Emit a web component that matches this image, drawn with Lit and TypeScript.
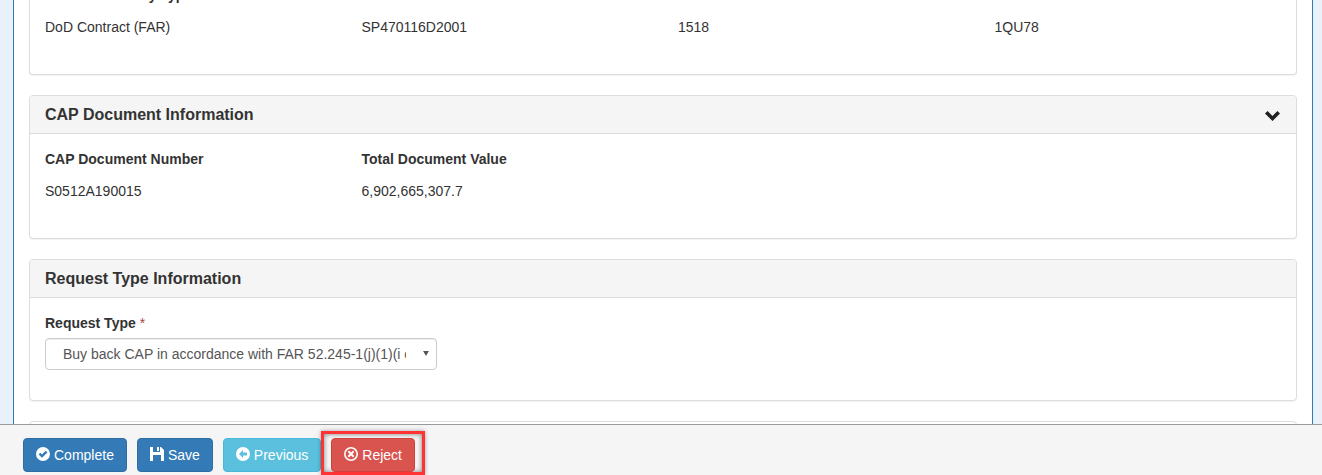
import { LitElement, html, css } from "lit";
import { customElement } from "lit/decorators.js";

@customElement("app-root")
export class AppRoot extends LitElement {
  static styles = css`
    :host {
      display: flex;
      flex-direction: column;
      height: 475px;
      overflow: hidden;
      background: #e9f1fa;
      font-family: "Liberation Sans", Arial, sans-serif;
      font-size: 14px;
      line-height: 20px;
      color: #333;
    }
    .scroll {
      flex: 1;
      min-height: 0;
      overflow: hidden;
      margin: 0 9px 0 13px;
      padding: 0 15px;
      background: #fff;
      border-left: 1px solid #337ab7;
      border-right: 1px solid #337ab7;
    }
    .stack { margin-top: -28px; display: flex; flex-direction: column; gap: 20px; }
    .panel {
      background: #fff;
      border: 1px solid #ddd;
      border-radius: 4px;
      box-shadow: 0 1px 1px rgba(0, 0, 0, 0.05);
      flex: none;
    }
    .panel.first { border-top: 0; height: 103px; padding: 13px 15px 0; box-sizing: border-box; }
    .panel.last { height: 60px; }
    .heading {
      height: 38px;
      box-sizing: border-box;
      padding: 8px 15px;
      background: #f5f5f5;
      border-bottom: 1px solid #ddd;
      border-radius: 3px 3px 0 0;
      font-size: 16px;
      font-weight: 700;
      line-height: 20px;
      display: flex;
      justify-content: space-between;
      align-items: center;
    }
    .chev { width: 15px; height: 12px; display: block; fill: #222; margin-right: 1px; }
    .body { padding: 15px; }
    .row { display: grid; grid-template-columns: repeat(4, 316.5px); }
    .label { font-weight: 700; height: 20px; white-space: nowrap; }
    .val { margin-top: 12px; height: 20px; white-space: nowrap; }
    .sp { height: 22px; }
    .req { color: #a94442; font-weight: 400; }
    .selwrap { position: relative; width: 392px; margin-top: 5px; margin-bottom: 15px; }
    select {
      display: block;
      appearance: none;
      -webkit-appearance: none;
      width: 100%;
      height: 32px;
      padding: 0 30px 0 17px;
      background: #fff;
      border: 1px solid #ccc;
      border-radius: 4px;
      box-shadow: inset 0 1px 1px rgba(0, 0, 0, 0.075);
      color: #555;
      font: 14px "Liberation Sans", Arial, sans-serif;
    }
    .caret {
      position: absolute;
      right: 8px;
      top: 13px;
      width: 6px;
      height: 5px;
      fill: #555;
    }
    .footer {
      flex: none;
      height: 51px;
      box-sizing: border-box;
      background: #f5f5f5;
      border-top: 1px solid #999;
      padding: 13px 0 0 23px;
      display: flex;
      align-items: flex-start;
      gap: 10px;
    }
    .btn {
      height: 34px;
      box-sizing: border-box;
      display: inline-flex;
      align-items: center;
      gap: 4px;
      padding: 0 12px;
      border: 1px solid;
      border-radius: 4px;
      color: #fff;
      font: 14px/20px "Liberation Sans", Arial, sans-serif;
    }
    .btn svg { width: 14px; height: 14px; fill: #fff; display: block; margin-top: -2px; }
    .primary { background: #337ab7; border-color: #2e6da4; }
    .info { background: #5bc0de; border-color: #46b8da; }
    .danger { background: #d9534f; border-color: #d43f3a; }
    .hl {
      margin: -7px 0 0 -10px;
      padding: 4px 7px 0;
      border: 3px solid #f33;
      box-sizing: border-box;
      height: 44px;
      box-shadow: 0 0 4px rgba(0, 0, 0, 0.35), inset 0 0 5px rgba(0, 0, 0, 0.5);
      flex: none;
    }
  `;

  render() {
    return html`
      <div class="scroll">
        <div class="stack">
          <section class="panel first">
            <div class="row">
              <div class="label">Contract Activity Type</div><div class="label"></div><div class="label"></div><div class="label"></div>
              <div class="val">DoD Contract (FAR)</div><div class="val">SP470116D2001</div><div class="val">1518</div><div class="val">1QU78</div>
            </div>
          </section>
          <section class="panel">
            <div class="heading">CAP Document Information
              <svg class="chev" viewBox="0 0 15 12"><path d="M0 4.6 2.6 2 7.5 6.9 12.4 2 15 4.6 7.5 12Z"/></svg>
            </div>
            <div class="body">
              <div class="row">
                <div class="label">CAP Document Number</div><div class="label">Total Document Value</div><div></div><div></div>
                <div class="val">S0512A190015</div><div class="val">6,902,665,307.7</div>
              </div>
              <div class="sp"></div>
            </div>
          </section>
          <section class="panel">
            <div class="heading">Request Type Information</div>
            <div class="body">
              <div class="label">Request Type <span class="req">*</span></div>
              <div class="selwrap">
                <select aria-label="Request Type"><option>Buy back CAP in accordance with FAR 52.245-1(j)(1)(i or ii)</option></select>
                <svg class="caret" viewBox="0 0 7 6"><path d="M0 0H7L3.5 6Z"/></svg>
              </div>
            </div>
          </section>
          <section class="panel last"></section>
        </div>
      </div>
      <div class="footer">
        <button class="btn primary">
          <svg viewBox="0 0 14 14"><path fill-rule="evenodd" d="M7 0a7 7 0 1 0 0 14A7 7 0 0 0 7 0ZM6 10.8 2.6 7.4 4.3 5.7 6 7.4 9.7 3.7 11.4 5.4Z"/></svg>Complete</button>
        <button class="btn primary">
          <svg viewBox="0 0 14 14"><path fill-rule="evenodd" d="M0 0h3v5h7V0h1l3 3v11H0ZM7 0h2v4H7ZM3 8v6h8V8Z"/></svg>Save</button>
        <button class="btn info">
          <svg viewBox="0 0 14 14"><path fill-rule="evenodd" d="M7 0a7 7 0 1 0 0 14A7 7 0 0 0 7 0ZM7 3 3 7l4 4V8.5h4v-3H7Z"/></svg>Previous</button>
        <div class="hl">
          <button class="btn danger">
            <svg viewBox="0 0 14 14"><path fill-rule="evenodd" d="M7 0a7 7 0 1 0 0 14A7 7 0 0 0 7 0ZM7 1.6a5.4 5.4 0 1 1 0 10.8A5.4 5.4 0 0 1 7 1.6ZM5 3.6 3.6 5 5.6 7 3.6 9 5 10.4 7 8.4 9 10.4 10.4 9 8.4 7 10.4 5 9 3.6 7 5.6Z"/></svg>Reject</button>
        </div>
      </div>
    `;
  }
}
